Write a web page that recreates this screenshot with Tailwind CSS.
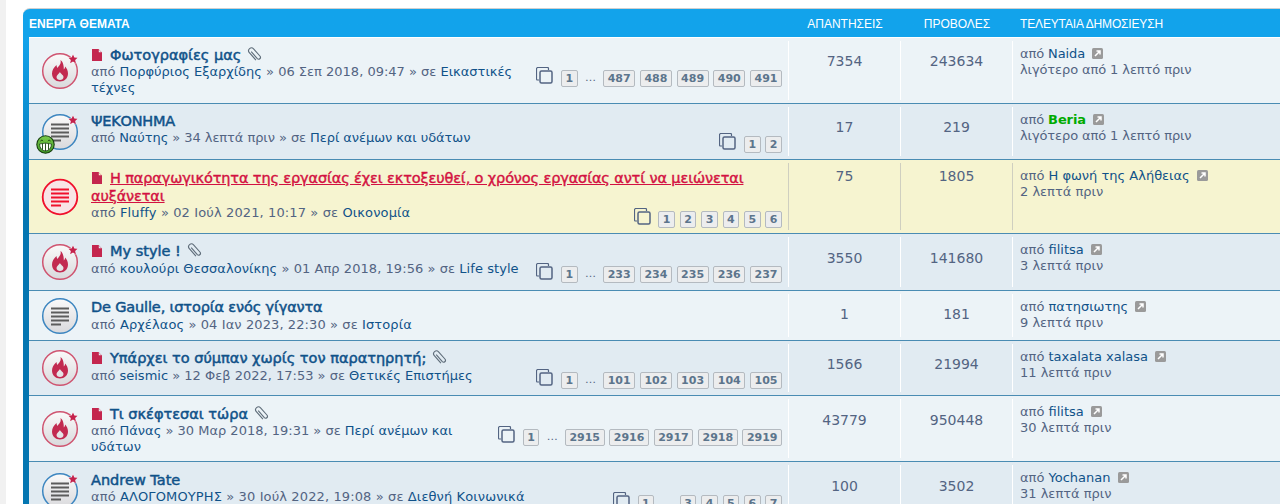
<!DOCTYPE html>
<html lang="el">
<head>
<meta charset="utf-8">
<script src="https://cdn.jsdelivr.net/npm/@tailwindcss/browser@4"></script>
</head>
<body class="bg-white overflow-hidden font-['DejaVu_Sans',sans-serif] text-[13px] leading-[16px] text-[#536482]">
<svg class="block w-0 h-0" width="0" height="0">
  <defs>
    <linearGradient id="g" x1="0" y1="0" x2="0" y2="1"><stop offset="0" stop-color="#fafafa"/><stop offset="1" stop-color="#d9d9dc"/></linearGradient>
    <linearGradient id="sm" x1="0" y1="0" x2="0" y2="1"><stop offset="0" stop-color="#7ccb4c"/><stop offset="1" stop-color="#3f9a26"/></linearGradient>
    <symbol id="star" viewBox="0 0 12 12"><path fill="#c4224c" stroke="#fff" stroke-width=".8" paint-order="stroke" d="M6 .5l1.600 3.600 3.900.4-2.900 2.600.8 3.900L6 9l-3.400 2 .8-3.900L.5 4.500l3.900-.4z"/></symbol>
    <symbol id="hot" viewBox="0 0 40 40"><circle cx="20" cy="20" r="17.300" fill="url(#g)" stroke="#cf5470" stroke-width="1.500"/><path fill="#c22a50" d="M20.500 9c1 4-1.500 5.500-3 8-.7-1-1-2-1-3-2.800 2.300-4.500 5.500-4.500 8.500 0 4.800 3.600 8 8 8s8-3.200 8-8c0-3-1.300-5.200-2.800-7-.1 1.300-.6 2.300-1.400 3 .2-4-1-8-3.300-9.500zM20 21c.5 2 3.500 2.700 3.500 5 0 1.800-1.500 3-3.500 3s-3.500-1.200-3.500-3c0-2 2.500-3 3.500-5z" fill-rule="evenodd"/></symbol>
    <symbol id="read" viewBox="0 0 40 40"><circle cx="20" cy="20" r="17.300" fill="url(#g)" stroke="#3d86c0" stroke-width="1.500"/><path stroke="#5c5c5c" stroke-width="1.800" fill="none" d="M11 12.500h18M11 16.500h18M11 20.500h18M11 24.500h18M11 28.500h10"/></symbol>
    <symbol id="anc" viewBox="0 0 40 40"><circle cx="20" cy="20" r="17.300" fill="#f8e4e6" stroke="#f0102c" stroke-width="1.800"/><path stroke="#f0102c" stroke-width="1.800" fill="none" d="M11 12.500h18M11 16.500h18M11 20.500h18M11 24.500h18M11 28.500h10"/></symbol>
    <symbol id="file" viewBox="0 0 10 12"><path fill="#c4264e" d="M0 0h6.500L10 3.500V12H0zM6.800.8v2.500h2.500z" fill-rule="evenodd"/></symbol>
    <symbol id="clip" viewBox="0 0 16 16"><path fill="none" stroke="#5f6d7a" stroke-width="1.200" d="M4.500 5.500L11 13a2 2 0 0 0 3-2.600L7 2.500a3 3 0 0 0-4.500 4L9.500 14.500"/></symbol>
    <symbol id="pages" viewBox="0 0 17 17"><path fill="none" stroke="#536482" stroke-width="1.200" d="M3 13H1.500a1 1 0 0 1-1-1V2a1.500 1.500 0 0 1 1.500-1.500h9.500a1 1 0 0 1 1 1V3"/><rect x="4" y="4" width="12" height="12" rx="1.500" fill="none" stroke="#536482" stroke-width="1.500"/></symbol>
    <symbol id="go" viewBox="0 0 11 11"><rect width="11" height="11" rx="1.500" fill="#9a9a9a"/><path fill="none" stroke="#fff" stroke-width="1.500" d="M3 8l4.500-4.500M4.500 3H8v3.500"/></symbol>
  </defs>
</svg>
<div class="flex h-[504px]">
  <div class="w-[6px] bg-[#f1f1f1] shrink-0"></div>
  <div class="w-[17px] shrink-0"></div>
  <div class="flex-1 mt-[8px] border-t border-[#cfcfcf] rounded-tl-[7px] pl-[6px] overflow-hidden bg-linear-to-b from-[#12a3eb] from-[6%] to-[#0476b1] to-[40%]">
    <div class="flex h-[28px] pt-[2px] items-center text-white font-['Liberation_Sans',sans-serif] text-[12px] -ml-[6px] pl-[6px]">
      <div class="w-[760px] font-bold">ΕΝΕΡΓΑ ΘΕΜΑΤΑ</div>
      <div class="w-[112px] text-center">ΑΠΑΝΤΗΣΕΙΣ</div>
      <div class="w-[112px] text-center">ΠΡΟΒΟΛΕΣ</div>
      <div class="pl-[7px] tracking-[-0.15px]">ΤΕΛΕΥΤΑΙΑ ΔΗΜΟΣΙΕΥΣΗ</div>
    </div>

    <div class="flex h-[67px] bg-[#ecf3f7] border-t border-white border-b border-b-[#4a8cb3]">
      <div class="w-[62px] shrink-0 flex items-center justify-center"><div class="relative w-[40px] h-[40px]"><svg class="w-[40px] h-[40px]"><use href="#hot"/></svg><svg class="absolute top-[3px] left-[28px] w-[10px] h-[10px]"><use href="#star"/></svg></div></div>
      <div class="w-[697px] shrink-0 pt-[7px] pr-[6px]">
        <div class="flex items-center h-[19px]"><svg class="w-[10px] h-[12px] ml-[1px] mr-[8px] shrink-0"><use href="#file"/></svg><a class="text-[#105289] text-[14.500px] [-webkit-text-stroke:0.5px]">Φωτογραφίες μας</a><svg class="w-[15px] h-[16px] ml-[6px] -mt-[2px]"><use href="#clip"/></svg></div>
        <div class="flex justify-between">
          <div class="w-[430px]">από <a class="text-[#105289]">Πορφύριος Εξαρχίδης</a> » 06 Σεπ 2018, 09:47 » σε <a class="text-[#105289]">Εικαστικές τέχνες</a></div>
          <div class="flex items-start gap-[4.750px] mt-[6px] font-bold text-[11px] leading-[15px]">
            <svg class="w-[17px] h-[17px] mr-[3px] -mt-[3px]"><use href="#pages"/></svg>
            <span class="px-[3.500px] h-[17px] border border-[#b4bac0] rounded-[2px] bg-[#ecedee] text-[#5c758c]">1</span><span class="w-[16px] text-center font-normal">…</span><span class="px-[3.500px] h-[17px] border border-[#b4bac0] rounded-[2px] bg-[#ecedee] text-[#5c758c]">487</span><span class="px-[3.500px] h-[17px] border border-[#b4bac0] rounded-[2px] bg-[#ecedee] text-[#5c758c]">488</span><span class="px-[3.500px] h-[17px] border border-[#b4bac0] rounded-[2px] bg-[#ecedee] text-[#5c758c]">489</span><span class="px-[3.500px] h-[17px] border border-[#b4bac0] rounded-[2px] bg-[#ecedee] text-[#5c758c]">490</span><span class="px-[3.500px] h-[17px] border border-[#b4bac0] rounded-[2px] bg-[#ecedee] text-[#5c758c]">491</span>
          </div>
        </div>
      </div>
      <div class="w-[112px] shrink-0 my-[3px] border-l border-white text-center text-[14px] pt-[12px]">7354</div>
      <div class="w-[112px] shrink-0 my-[3px] border-l border-white text-center text-[14px] pt-[12px]">243634</div>
      <div class="flex-1 my-[3px] border-l border-white pl-[7px] pt-[5px] tracking-[-0.1px]">από <a class="text-[#105289]">Naida</a> <svg class="inline w-[11px] h-[11px] ml-[3px] -mt-[2px]"><use href="#go"/></svg><br>λιγότερο από 1 λεπτό πριν</div>
    </div>

    <div class="flex h-[56px] bg-[#e1ebf2] border-b border-b-[#4a8cb3]">
      <div class="w-[62px] shrink-0 flex items-center justify-center"><div class="relative w-[40px] h-[40px]"><svg class="w-[40px] h-[40px]"><use href="#read"/></svg><svg class="absolute top-[3px] left-[28px] w-[10px] h-[10px]"><use href="#star"/></svg><svg class="absolute -left-[4px] top-[23px] w-[19px] h-[19px]" viewBox="0 0 19 19"><circle cx="9.500" cy="9.500" r="8.700" fill="url(#sm)" stroke="#173f10" stroke-width="1.100"/><path fill="#fff" stroke="#173f10" stroke-width=".8" d="M3.500 9q6-1.800 12 0q-.5 6.500-6 7q-5.500-.5-6-7z"/><path stroke="#173f10" stroke-width=".9" d="M6.500 8.500v6.300M9.500 8.200v7.800M12.500 8.500v6.300"/><path fill="none" stroke="#173f10" stroke-width="1" d="M4.500 6c.7-1 1.900-1 2.600 0M11.900 6c.7-1 1.900-1 2.600 0"/></svg></div></div>
      <div class="w-[697px] shrink-0 pt-[7px] pr-[6px]">
        <div class="h-[19px] flex items-center"><a class="text-[#105289] text-[14.500px] tracking-[-0.2px] [-webkit-text-stroke:0.5px]">ΨΕΚΟΝΗΜΑ</a></div>
        <div class="flex justify-between">
          <div class="tracking-[-0.07px]">από <a class="text-[#105289]">Ναύτης</a> » 34 λεπτά πριν » σε <a class="text-[#105289]">Περί ανέμων και υδάτων</a></div>
          <div class="flex items-start gap-[4.750px] mt-[6px] font-bold text-[11px] leading-[15px]">
            <svg class="w-[17px] h-[17px] mr-[3px] -mt-[3px]"><use href="#pages"/></svg>
            <span class="px-[3.500px] h-[17px] border border-[#b4bac0] rounded-[2px] bg-[#ecedee] text-[#5c758c]">1</span><span class="px-[3.500px] h-[17px] border border-[#b4bac0] rounded-[2px] bg-[#ecedee] text-[#5c758c]">2</span>
          </div>
        </div>
      </div>
      <div class="w-[112px] shrink-0 my-[3px] border-l border-white text-center text-[14px] pt-[12px]">17</div>
      <div class="w-[112px] shrink-0 my-[3px] border-l border-white text-center text-[14px] pt-[12px]">219</div>
      <div class="flex-1 my-[3px] border-l border-white pl-[7px] pt-[5px] tracking-[-0.1px]">από <a class="text-[#00aa00] font-bold">Beria</a> <svg class="inline w-[11px] h-[11px] ml-[3px] -mt-[2px]"><use href="#go"/></svg><br>λιγότερο από 1 λεπτό πριν</div>
    </div>

    <div class="flex h-[74px] bg-[#f6f4d0] border-b border-b-[#4a8cb3]">
      <div class="w-[62px] shrink-0 flex items-center justify-center"><svg class="w-[40px] h-[40px]"><use href="#anc"/></svg></div>
      <div class="w-[697px] shrink-0 pt-[9px] pr-[6px]">
        <div class="text-[#d31141] underline text-[14.500px] leading-[18px] tracking-[-0.13px] [-webkit-text-stroke:0.4px]"><svg class="inline w-[10px] h-[12px] ml-[1px] mr-[8px] -mt-[2px] align-middle"><use href="#file"/></svg>Η παραγωγικότητα της εργασίας έχει εκτοξευθεί, ο χρόνος εργασίας αντί να μειώνεται αυξάνεται</div>
        <div class="flex justify-between">
          <div class="tracking-[0.12px]">από <a class="text-[#105289]">Fluffy</a> » 02 Ιούλ 2021, 10:17 » σε <a class="text-[#105289]">Οικονομία</a></div>
          <div class="flex items-start gap-[4.750px] mt-[6px] font-bold text-[11px] leading-[15px]">
            <svg class="w-[17px] h-[17px] mr-[3px] -mt-[3px]"><use href="#pages"/></svg>
            <span class="px-[3.500px] h-[17px] border border-[#b4bac0] rounded-[2px] bg-[#ecedee] text-[#5c758c]">1</span><span class="px-[3.500px] h-[17px] border border-[#b4bac0] rounded-[2px] bg-[#ecedee] text-[#5c758c]">2</span><span class="px-[3.500px] h-[17px] border border-[#b4bac0] rounded-[2px] bg-[#ecedee] text-[#5c758c]">3</span><span class="px-[3.500px] h-[17px] border border-[#b4bac0] rounded-[2px] bg-[#ecedee] text-[#5c758c]">4</span><span class="px-[3.500px] h-[17px] border border-[#b4bac0] rounded-[2px] bg-[#ecedee] text-[#5c758c]">5</span><span class="px-[3.500px] h-[17px] border border-[#b4bac0] rounded-[2px] bg-[#ecedee] text-[#5c758c]">6</span>
          </div>
        </div>
      </div>
      <div class="w-[112px] shrink-0 my-[3px] border-l border-[#cfcfc0] text-center text-[14px] pt-[5px]">75</div>
      <div class="w-[112px] shrink-0 my-[3px] border-l border-[#cfcfc0] text-center text-[14px] pt-[5px]">1805</div>
      <div class="flex-1 my-[3px] border-l border-[#cfcfc0] pl-[7px] pt-[5px]">από <a class="text-[#105289]">Η φωνή της Αλήθειας</a> <svg class="inline w-[11px] h-[11px] ml-[3px] -mt-[2px]"><use href="#go"/></svg><br>2 λεπτά πριν</div>
    </div>

    <div class="flex h-[57px] bg-[#e1ebf2] border-b border-b-[#4a8cb3]">
      <div class="w-[62px] shrink-0 flex items-center justify-center"><div class="relative w-[40px] h-[40px]"><svg class="w-[40px] h-[40px]"><use href="#hot"/></svg><svg class="absolute top-[3px] left-[28px] w-[10px] h-[10px]"><use href="#star"/></svg></div></div>
      <div class="w-[697px] shrink-0 pt-[7px] pr-[6px]">
        <div class="flex items-center h-[20px]"><svg class="w-[10px] h-[12px] ml-[1px] mr-[8px] shrink-0"><use href="#file"/></svg><a class="text-[#105289] text-[14.500px] [-webkit-text-stroke:0.5px]">My style !</a><svg class="w-[15px] h-[16px] ml-[6px] -mt-[2px]"><use href="#clip"/></svg></div>
        <div class="flex justify-between">
          <div class="tracking-[0.06px]">από <a class="text-[#105289]">κουλούρι Θεσσαλονίκης</a> » 01 Απρ 2018, 19:56 » σε <a class="text-[#105289]">Life style</a></div>
          <div class="flex items-start gap-[4.750px] mt-[5px] font-bold text-[11px] leading-[15px]">
            <svg class="w-[17px] h-[17px] mr-[3px] -mt-[3px]"><use href="#pages"/></svg>
            <span class="px-[3.500px] h-[17px] border border-[#b4bac0] rounded-[2px] bg-[#ecedee] text-[#5c758c]">1</span><span class="w-[16px] text-center font-normal">…</span><span class="px-[3.500px] h-[17px] border border-[#b4bac0] rounded-[2px] bg-[#ecedee] text-[#5c758c]">233</span><span class="px-[3.500px] h-[17px] border border-[#b4bac0] rounded-[2px] bg-[#ecedee] text-[#5c758c]">234</span><span class="px-[3.500px] h-[17px] border border-[#b4bac0] rounded-[2px] bg-[#ecedee] text-[#5c758c]">235</span><span class="px-[3.500px] h-[17px] border border-[#b4bac0] rounded-[2px] bg-[#ecedee] text-[#5c758c]">236</span><span class="px-[3.500px] h-[17px] border border-[#b4bac0] rounded-[2px] bg-[#ecedee] text-[#5c758c]">237</span>
          </div>
        </div>
      </div>
      <div class="w-[112px] shrink-0 my-[3px] border-l border-white text-center text-[14px] pt-[13px]">3550</div>
      <div class="w-[112px] shrink-0 my-[3px] border-l border-white text-center text-[14px] pt-[13px]">141680</div>
      <div class="flex-1 my-[3px] border-l border-white pl-[7px] pt-[5px]">από <a class="text-[#105289]">filitsa</a> <svg class="inline w-[11px] h-[11px] ml-[3px] -mt-[2px]"><use href="#go"/></svg><br>3 λεπτά πριν</div>
    </div>

    <div class="flex h-[50px] bg-[#ecf3f7] border-b border-b-[#4a8cb3]">
      <div class="w-[62px] shrink-0 flex items-center justify-center"><svg class="w-[40px] h-[40px]"><use href="#read"/></svg></div>
      <div class="w-[697px] shrink-0 pt-[6px] pr-[6px]">
        <div class="h-[20px] flex items-center"><a class="text-[#105289] text-[14.500px] tracking-[-0.15px] [-webkit-text-stroke:0.5px]">De Gaulle, ιστορία ενός γίγαντα</a></div>
        <div class="tracking-[0.1px]">από <a class="text-[#105289]">Αρχέλαος</a> » 04 Ιαν 2023, 22:30 » σε <a class="text-[#105289]">Ιστορία</a></div>
      </div>
      <div class="w-[112px] shrink-0 my-[3px] border-l border-white text-center text-[14px] pt-[12px]">1</div>
      <div class="w-[112px] shrink-0 my-[3px] border-l border-white text-center text-[14px] pt-[12px]">181</div>
      <div class="flex-1 my-[3px] border-l border-white pl-[7px] pt-[5px]">από <a class="text-[#105289]">πατησιωτης</a> <svg class="inline w-[11px] h-[11px] ml-[3px] -mt-[2px]"><use href="#go"/></svg><br>9 λεπτά πριν</div>
    </div>

    <div class="flex h-[55px] bg-[#e1ebf2] border-b border-b-[#4a8cb3]">
      <div class="w-[62px] shrink-0 flex items-center justify-center"><svg class="w-[40px] h-[40px]"><use href="#hot"/></svg></div>
      <div class="w-[697px] shrink-0 pt-[7px] pr-[6px]">
        <div class="flex items-center h-[20px]"><svg class="w-[10px] h-[12px] ml-[1px] mr-[8px] shrink-0"><use href="#file"/></svg><a class="text-[#105289] text-[14.500px] [-webkit-text-stroke:0.5px]">Υπάρχει το σύμπαν χωρίς τον παρατηρητή;</a><svg class="w-[15px] h-[16px] ml-[6px] -mt-[2px]"><use href="#clip"/></svg></div>
        <div class="flex justify-between">
          <div>από <a class="text-[#105289]">seismic</a> » 12 Φεβ 2022, 17:53 » σε <a class="text-[#105289]">Θετικές Επιστήμες</a></div>
          <div class="flex items-start gap-[4.750px] mt-[4px] font-bold text-[11px] leading-[15px]">
            <svg class="w-[17px] h-[17px] mr-[3px] -mt-[3px]"><use href="#pages"/></svg>
            <span class="px-[3.500px] h-[17px] border border-[#b4bac0] rounded-[2px] bg-[#ecedee] text-[#5c758c]">1</span><span class="w-[16px] text-center font-normal">…</span><span class="px-[3.500px] h-[17px] border border-[#b4bac0] rounded-[2px] bg-[#ecedee] text-[#5c758c]">101</span><span class="px-[3.500px] h-[17px] border border-[#b4bac0] rounded-[2px] bg-[#ecedee] text-[#5c758c]">102</span><span class="px-[3.500px] h-[17px] border border-[#b4bac0] rounded-[2px] bg-[#ecedee] text-[#5c758c]">103</span><span class="px-[3.500px] h-[17px] border border-[#b4bac0] rounded-[2px] bg-[#ecedee] text-[#5c758c]">104</span><span class="px-[3.500px] h-[17px] border border-[#b4bac0] rounded-[2px] bg-[#ecedee] text-[#5c758c]">105</span>
          </div>
        </div>
      </div>
      <div class="w-[112px] shrink-0 my-[3px] border-l border-white text-center text-[14px] pt-[12px]">1566</div>
      <div class="w-[112px] shrink-0 my-[3px] border-l border-white text-center text-[14px] pt-[12px]">21994</div>
      <div class="flex-1 my-[3px] border-l border-white pl-[7px] pt-[5px]">από <a class="text-[#105289]">taxalata xalasa</a> <svg class="inline w-[11px] h-[11px] ml-[3px] -mt-[2px]"><use href="#go"/></svg><br>11 λεπτά πριν</div>
    </div>

    <div class="flex h-[66px] bg-[#ecf3f7] border-b border-b-[#4a8cb3]">
      <div class="w-[62px] shrink-0 flex items-center justify-center"><div class="relative w-[40px] h-[40px]"><svg class="w-[40px] h-[40px]"><use href="#hot"/></svg><svg class="absolute top-[3px] left-[28px] w-[10px] h-[10px]"><use href="#star"/></svg></div></div>
      <div class="w-[697px] shrink-0 pt-[8px] pr-[6px]">
        <div class="flex items-center h-[19px]"><svg class="w-[10px] h-[12px] ml-[1px] mr-[8px] shrink-0"><use href="#file"/></svg><a class="text-[#105289] text-[14.500px] [-webkit-text-stroke:0.5px]">Τι σκέφτεσαι τώρα</a><svg class="w-[15px] h-[16px] ml-[6px] -mt-[2px]"><use href="#clip"/></svg></div>
        <div class="flex justify-between">
          <div class="w-[385px]">από <a class="text-[#105289]">Πάνας</a> » 30 Μαρ 2018, 19:31 » σε <a class="text-[#105289]">Περί ανέμων και υδάτων</a></div>
          <div class="flex items-start gap-[4.750px] mt-[6px] font-bold text-[11px] leading-[15px]">
            <svg class="w-[17px] h-[17px] mr-[3px] -mt-[3px]"><use href="#pages"/></svg>
            <span class="px-[3.500px] h-[17px] border border-[#b4bac0] rounded-[2px] bg-[#ecedee] text-[#5c758c]">1</span><span class="w-[16px] text-center font-normal">…</span><span class="px-[3.500px] h-[17px] border border-[#b4bac0] rounded-[2px] bg-[#ecedee] text-[#5c758c]">2915</span><span class="px-[3.500px] h-[17px] border border-[#b4bac0] rounded-[2px] bg-[#ecedee] text-[#5c758c]">2916</span><span class="px-[3.500px] h-[17px] border border-[#b4bac0] rounded-[2px] bg-[#ecedee] text-[#5c758c]">2917</span><span class="px-[3.500px] h-[17px] border border-[#b4bac0] rounded-[2px] bg-[#ecedee] text-[#5c758c]">2918</span><span class="px-[3.500px] h-[17px] border border-[#b4bac0] rounded-[2px] bg-[#ecedee] text-[#5c758c]">2919</span>
          </div>
        </div>
      </div>
      <div class="w-[112px] shrink-0 my-[3px] border-l border-white text-center text-[14px] pt-[13px]">43779</div>
      <div class="w-[112px] shrink-0 my-[3px] border-l border-white text-center text-[14px] pt-[13px]">950448</div>
      <div class="flex-1 my-[3px] border-l border-white pl-[7px] pt-[5px]">από <a class="text-[#105289]">filitsa</a> <svg class="inline w-[11px] h-[11px] ml-[3px] -mt-[2px]"><use href="#go"/></svg><br>30 λεπτά πριν</div>
    </div>

    <div class="flex h-[66px] bg-[#e1ebf2]">
      <div class="w-[62px] shrink-0 flex items-start justify-center pt-[9px]"><div class="relative w-[40px] h-[40px]"><svg class="w-[40px] h-[40px]"><use href="#read"/></svg><svg class="absolute top-[3px] left-[28px] w-[10px] h-[10px]"><use href="#star"/></svg></div></div>
      <div class="w-[697px] shrink-0 pt-[8px] pr-[6px]">
        <div class="h-[19px] flex items-center"><a class="text-[#105289] text-[14.500px] [-webkit-text-stroke:0.5px]">Andrew Tate</a></div>
        <div class="flex justify-between">
          <div class="tracking-[0.12px]">από <a class="text-[#105289]">ΑΛΟΓΟΜΟΥΡΗΣ</a> » 30 Ιούλ 2022, 19:08 » σε <a class="text-[#105289]">Διεθνή Κοινωνικά</a></div>
          <div class="flex items-start gap-[4.750px] mt-[6px] font-bold text-[11px] leading-[15px]">
            <svg class="w-[17px] h-[17px] mr-[3px] -mt-[3px]"><use href="#pages"/></svg>
            <span class="px-[3.500px] h-[17px] border border-[#b4bac0] rounded-[2px] bg-[#ecedee] text-[#5c758c]">1</span><span class="w-[16px] text-center font-normal">…</span><span class="px-[3.500px] h-[17px] border border-[#b4bac0] rounded-[2px] bg-[#ecedee] text-[#5c758c]">3</span><span class="px-[3.500px] h-[17px] border border-[#b4bac0] rounded-[2px] bg-[#ecedee] text-[#5c758c]">4</span><span class="px-[3.500px] h-[17px] border border-[#b4bac0] rounded-[2px] bg-[#ecedee] text-[#5c758c]">5</span><span class="px-[3.500px] h-[17px] border border-[#b4bac0] rounded-[2px] bg-[#ecedee] text-[#5c758c]">6</span><span class="px-[3.500px] h-[17px] border border-[#b4bac0] rounded-[2px] bg-[#ecedee] text-[#5c758c]">7</span>
          </div>
        </div>
      </div>
      <div class="w-[112px] shrink-0 my-[3px] border-l border-white text-center text-[14px] pt-[13px]">100</div>
      <div class="w-[112px] shrink-0 my-[3px] border-l border-white text-center text-[14px] pt-[13px]">3502</div>
      <div class="flex-1 my-[3px] border-l border-white pl-[7px] pt-[5px]">από <a class="text-[#105289]">Yochanan</a> <svg class="inline w-[11px] h-[11px] ml-[3px] -mt-[2px]"><use href="#go"/></svg><br>31 λεπτά πριν</div>
    </div>
  </div>
</div>
</body>
</html>
